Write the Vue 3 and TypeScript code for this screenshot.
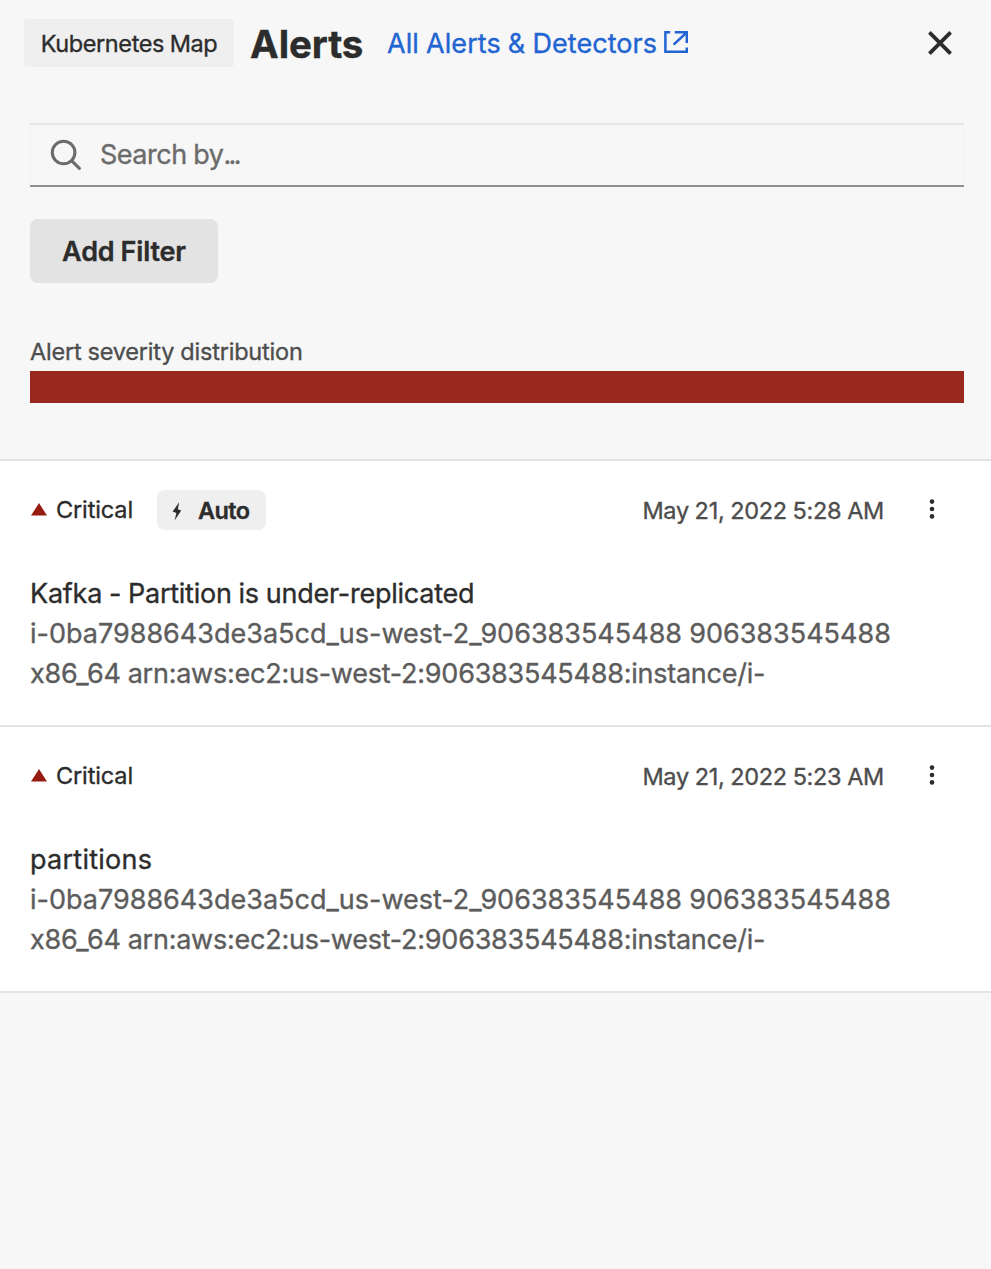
<script setup lang="ts">
interface Alert {
  id: number
  title: string
  long: boolean
  auto: boolean
  time: string
}

const lines = [
  'i-0ba7988643de3a5cd_us-west-2_906383545488 906383545488',
  'x86_64 arn:aws:ec2:us-west-2:906383545488:instance/i-',
]

const alerts: Alert[] = [
  { id: 1, title: 'Kafka - Partition is under-replicated', long: true, auto: true, time: 'May 21, 2022 5:28 AM' },
  { id: 2, title: 'partitions', long: false, auto: false, time: 'May 21, 2022 5:23 AM' },
]
</script>

<template>
  <main class="panel">
    <header class="header">
      <button class="crumb" type="button">Kubernetes Map</button>
      <h1 class="heading">Alerts</h1>
      <a class="link">
        <span>All Alerts &amp; Detectors</span>
        <svg width="24" height="22" viewBox="0 0 24 22" fill="none" stroke="currentColor" stroke-width="2.5">
          <path d="M6.2 1.25H1.4V20.75H22.8V16.6" />
          <path d="M10.8 1.25H22.8V12" />
          <path d="M22.6 1.5L9.6 13.6" />
        </svg>
      </a>
      <button class="close" type="button" aria-label="Close">
        <svg width="26" height="26" viewBox="0 0 26 26" fill="none" stroke="currentColor" stroke-width="3.8">
          <path d="M2.4 2.4L23.6 23.6M23.6 2.4L2.4 23.6" />
        </svg>
      </button>
    </header>

    <section class="filters">
      <div class="search">
        <svg width="32" height="32" viewBox="0 0 32 32" fill="none" stroke="currentColor" stroke-width="3.1">
          <circle cx="13.6" cy="13.5" r="11.3" />
          <path d="M21.8 21.8L29.4 29.4" stroke-linecap="round" />
        </svg>
        <span class="placeholder">Search by<span class="ellipsis">...</span></span>
      </div>
      <button class="add" type="button">Add Filter</button>
      <div class="label">Alert severity distribution</div>
      <div class="bar"></div>
    </section>

    <ul class="list">
      <li v-for="a in alerts" :key="a.id" class="alert">
        <div class="row">
          <svg class="tri" width="16" height="13" viewBox="0 0 16 13"><path d="M8 0L16 12.6H0Z" fill="#961c11" /></svg>
          <span class="severity">Critical</span>
          <span v-if="a.auto" class="chip">
            <svg width="10" height="19" viewBox="0 0 10 19"><path d="M7.2 0.3L0.6 9.6L4.4 11L2.6 18.6L9.2 8.4L5.8 7.2Z" fill="currentColor" /></svg>
            <span>Auto</span>
          </span>
          <time class="time">{{ a.time }}</time>
          <svg class="dots" width="6" height="20" viewBox="0 0 6 20" fill="currentColor">
            <circle cx="3" cy="2.6" r="2.3" /><circle cx="3" cy="10" r="2.3" /><circle cx="3" cy="17.4" r="2.3" />
          </svg>
        </div>
        <h2 class="title" :class="{ long: a.long }">{{ a.title }}</h2>
        <p class="desc"><span v-for="(l, i) in lines" :key="i" class="line">{{ l }}</span></p>
      </li>
    </ul>
  </main>
</template>

<style>
body { margin: 0; background: #f7f7f7; }
</style>

<style scoped>
.panel { min-height: 1269px; background: #f7f7f7; color: #2c2c2c; font-family: Inter, "Liberation Sans", sans-serif; font-size: 27px; font-weight: 400; word-spacing: -0.5px; -webkit-text-stroke: 0.35px currentColor; overflow: hidden; }
button { border: 0; padding: 0; font: inherit; color: inherit; background: none; letter-spacing: inherit; word-spacing: inherit; }
svg { display: block; flex: none; }
.header { display: flex; align-items: center; height: 86px; padding: 0 38px 0 24px; box-sizing: border-box; }
.crumb { width: 210px; height: 48px; border-radius: 4px; background: #efefef; font-size: 23.5px; letter-spacing: -0.4px; }
.heading { margin: 2px 0 0 16px; width: 113px; font-size: 38.5px; font-weight: 750; letter-spacing: -0.1px; white-space: nowrap; }
.link { display: flex; margin-left: 24px; gap: 7px; align-items: center; color: #2264d1; letter-spacing: 0.06px; -webkit-text-stroke: 0.35px #2264d1; }
.link svg { margin-bottom: 2px; }
.close { margin-left: auto; }
.filters { height: 459px; margin-top: -86px; padding: 123px 27px 0 30px; box-sizing: border-box; }
.search { display: flex; align-items: center; height: 64px; box-sizing: border-box; padding-left: 20px; gap: 18px; border-top: 2px solid #e5e5e5; border-bottom: 2px solid #909090; box-shadow: inset 1px 0 #f2f2f2, inset -1px 0 #f2f2f2; color: #6b6b6b; letter-spacing: -0.5px; -webkit-text-stroke: 0.35px #6b6b6b; }
.placeholder { margin-bottom: 2px; }
.ellipsis { letter-spacing: -2.6px; }
.add { display: block; margin-top: 32px; width: 188px; height: 64px; border-radius: 8px; background: #e3e3e3; font-weight: 600; letter-spacing: -0.18px; }
.label { margin-top: 52px; height: 36px; line-height: 34px; font-size: 23.5px; letter-spacing: -0.19px; color: #4d4d4d; -webkit-text-stroke: 0.35px #4d4d4d; }
.bar { height: 32px; background: #99281e; }
.list { margin: 0; padding: 0; list-style: none; border-top: 2px solid #e3e3e3; }
.alert { height: 266px; box-sizing: border-box; padding: 29px 56px 0 31px; background: #fff; border-bottom: 2px solid #e3e3e3; }
.row { display: flex; align-items: center; height: 40px; font-size: 23.5px; }
.tri { margin-bottom: 2px; }
.severity { width: 77px; margin: 0 0 1px 9px; letter-spacing: -0.13px; }
.chip { display: flex; align-items: center; box-sizing: border-box; width: 109px; height: 40px; margin-left: 24px; padding: 1px 0 0 15px; gap: 16px; border-radius: 8px; background: #efefef; font-weight: 600; letter-spacing: -0.6px; }
.chip svg { margin-top: 2px; }
.time { margin: 1px 0 0 auto; letter-spacing: -0.3px; color: #4d4d4d; -webkit-text-stroke: 0.35px #4d4d4d; }
.dots { margin: 0 0 2px 45px; }
.title { margin: 44px 0 0 -1px; font-size: 27px; font-weight: 400; line-height: 40px; letter-spacing: 0.25px; }
.long { letter-spacing: -0.24px; }
.desc { margin: 0 0 0 -1px; color: #5c5c5c; line-height: 40px; letter-spacing: 0; white-space: nowrap; -webkit-text-stroke: 0.35px #5c5c5c; }
.line { display: block; }
.line + .line { letter-spacing: -0.24px; }
</style>
